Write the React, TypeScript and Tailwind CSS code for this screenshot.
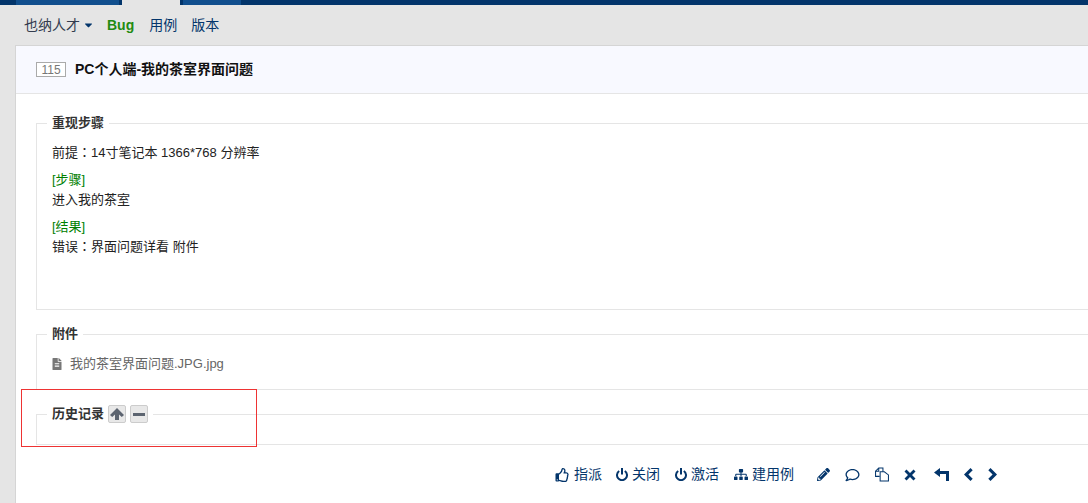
import { FaCaretDown, FaFileAlt, FaPencilAlt, FaSitemap, FaRegThumbsUp, FaRegComment } from "react-icons/fa";

const font = "font-['Liberation_Sans','Noto_Sans_CJK_SC',sans-serif]";

const Legend = ({ children }: { children: React.ReactNode }) => (
  <div className="absolute left-[10px] top-[-10px] flex h-[18px] items-center gap-[4px] bg-white px-[5px] text-[13px] font-bold leading-[18px] text-[#333]">
    {children}
  </div>
);

const ActionLink = ({ icon, label, className = "" }: { icon: React.ReactNode; label: string; className?: string }) => (
  <span className={`flex items-center gap-[4px] text-[14px] text-[#03356b] ${className}`}>
    {icon}
    {label}
  </span>
);

const PowerIcon = () => (
  <svg viewBox="0 0 12 13" className="h-[13px] w-[12px]" fill="none" stroke="currentColor" strokeWidth="2">
    <path d="M3.2 3 A5 5 0 1 0 8.8 3" />
    <path d="M6 0 V6.5" />
  </svg>
);

const Colon = () => <span className="font-['Noto_Sans_CJK_TC'] leading-[0]">：</span>;

export default function App() {
  return (
    <div className={`${font} flex h-[503px] w-[1088px] flex-col overflow-hidden bg-[#e5e5e5] text-[13px]`}>
      {/* top nav strip */}
      <div className="flex h-[5px] bg-[#03356b]">
        <div className="ml-[16px] h-full w-[103px] bg-[#114f8e]" />
        <div className="w-[3px]" />
        <div className="h-full w-[58px] bg-[#e5e5e5]" />
        <div className="w-[3px]" />
        <div className="h-full w-[58px] bg-[#114f8e]" />
      </div>

      {/* sub nav */}
      <div className="flex h-[40px] items-center pl-[24px] text-[14px]">
        <span className="flex items-center gap-[4px] text-[#333c4f]">
          也纳人才
          <FaCaretDown className="h-[12px] w-[9px] text-[#03356b]" />
        </span>
        <span className="ml-[14px] font-bold text-[#228b11]">Bug</span>
        <span className="ml-[15px] text-[#03356b]">用例</span>
        <span className="ml-[14px] text-[#03356b]">版本</span>
      </div>

      {/* content */}
      <div className="ml-[15px] flex flex-1 flex-col border-t border-l border-[#d5d5d5] bg-white">
        <div className="flex h-[48px] items-center border-b border-[#e5e5e5] bg-[#f8f9ff] pl-[20px]">
          <span className="flex h-[15px] w-[30px] items-center justify-center border border-[#aaa] bg-white text-[12px] text-[#777]">
            115
          </span>
          <span className="ml-[9px] text-[14px] font-bold text-[#111]">PC个人端-我的茶室界面问题</span>
        </div>

        <div className="flex flex-col pl-[20px]">
          <section className="relative mt-[29px] h-[187px] border-t border-l border-b border-[#e5e5e5] pl-[15px]">
            <Legend>重现步骤</Legend>
            <p className="mt-[19px] leading-[20px] text-[#222]">前提<Colon />14寸笔记本 1366*768 分辨率</p>
            <p className="mt-[7px] leading-[20px] text-[#222]">
              <span className="block text-[#008000]">[步骤]</span>
              进入我的茶室
            </p>
            <p className="mt-[7px] leading-[20px] text-[#222]">
              <span className="block text-[#008000]">[结果]</span>
              错误<Colon />界面问题详看 附件
            </p>
          </section>

          <section className="relative mt-[24px] h-[56px] border-t border-l border-b border-[#e5e5e5] pl-[15px]">
            <Legend>附件</Legend>
            <div className="mt-[19px] flex items-center gap-[8px] text-[#666]">
              <FaFileAlt className="h-[12px] w-[10px] text-[#777]" />
              我的茶室界面问题.JPG.jpg
            </div>
          </section>

          <section className="relative mt-[24px] h-[31px] border-t border-l border-b border-[#e5e5e5]">
            <Legend>
              历史记录
              <span className="flex h-[18px] w-[18px] items-center justify-center rounded-[2px] border border-[#ccc] bg-[#e8e8e8]">
                <svg viewBox="0 0 14 14" className="h-[14px] w-[14px] text-[#5c6470]" fill="currentColor">
                  <path d="M7 1 L14 8 L11.8 10 L9 7.4 V13 H5 V7.4 L2.2 10 L0 8 Z" />
                </svg>
              </span>
              <span className="flex h-[18px] w-[18px] items-center justify-center rounded-[2px] border border-[#ccc] bg-[#e8e8e8]">
                <span className="h-[3px] w-[12px] bg-[#5c6470]" />
              </span>
            </Legend>
          </section>
        </div>

        {/* actions */}
        <div className="mt-[19px] flex items-center pl-[539px]">
          <div className="flex items-center gap-[15px]">
            <ActionLink className="-mr-px" icon={<FaRegThumbsUp className="h-[14px] w-[15px]" />} label="指派" />
            <ActionLink icon={<PowerIcon />} label="关闭" />
            <ActionLink icon={<PowerIcon />} label="激活" />
            <ActionLink icon={<FaSitemap className="h-[13px] w-[14px]" />} label="建用例" />
          </div>
          <div className="ml-[23px] flex items-center gap-[15px] text-[#03356b]">
            <FaPencilAlt className="h-[13px] w-[13px]" />
            <FaRegComment className="h-[14px] w-[15px]" />
            <svg viewBox="0 0 15 15" className="h-[15px] w-[14px]" fill="none" stroke="currentColor" strokeWidth="1.1">
              <path d="M5 9.5 H0.6 V4 L4 0.6 H8.5 V4.5" />
              <path d="M4 0.6 V4 H0.6" />
              <path d="M5.5 4.6 H10 L14.4 8 V14.4 H5.5 Z" />
            </svg>
            <svg viewBox="0 0 12 12" className="h-[12px] w-[12px]" fill="currentColor">
              <path d="M2.5 0.5 L6 4 L9.5 0.5 L11.5 2.5 L8 6 L11.5 9.5 L9.5 11.5 L6 8 L2.5 11.5 L0.5 9.5 L4 6 L0.5 2.5 Z" />
            </svg>
          </div>
          <div className="ml-[18px] flex items-center gap-[15px] text-[#03356b]">
            <svg viewBox="0 0 15 13" className="h-[13px] w-[15px]" fill="currentColor">
              <path d="M6 0 V3 H15 V13 H12 V6 H6 V9 L0 4.5 Z" />
            </svg>
            <svg viewBox="0 0 9 13" className="h-[13px] w-[9px]" fill="currentColor">
              <path d="M6.5 0 L8.7 2.2 L4.4 6.5 L8.7 10.8 L6.5 13 L0 6.5 Z" />
            </svg>
            <svg viewBox="0 0 9 13" className="h-[13px] w-[9px]" fill="currentColor">
              <path d="M2.5 0 L0.3 2.2 L4.6 6.5 L0.3 10.8 L2.5 13 L9 6.5 Z" />
            </svg>
          </div>
        </div>
      </div>

      {/* red annotation box */}
      <div className="absolute left-[21px] top-[389px] h-[58px] w-[236px] border border-[#ee3333]" />
    </div>
  );
}
